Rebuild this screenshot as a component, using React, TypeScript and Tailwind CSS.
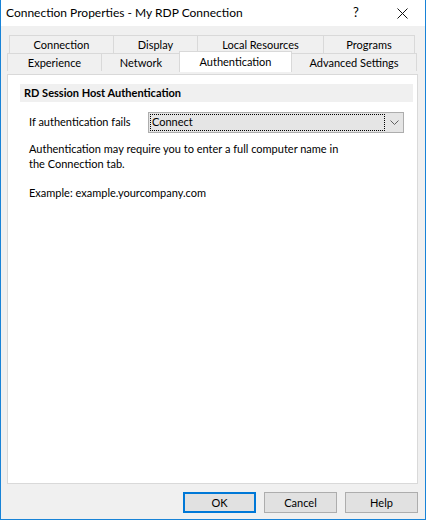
import React from "react";

const font = { fontFamily: 'Lato, "Noto Sans", sans-serif' };

function Tab({ label, w, last }: { label: string; w: number; last?: boolean }) {
  return (
    <div
      className={`flex h-[18px] items-center justify-center whitespace-nowrap border-t border-l border-[#d9d9d9] bg-[#f0f0f0] text-[11px] leading-none text-black ${last ? "border-r" : ""}`}
      style={{ width: w }}
    >
      {label}
    </div>
  );
}

export default function App() {
  return (
    <div
      className="flex h-[520px] w-[426px] flex-col border-x border-b border-[#1883d7] bg-[#f0f0f0] text-black"
      style={font}
    >
      {/* Title bar */}
      <div className="flex h-[26px] items-center bg-white">
        <div className="whitespace-nowrap pl-[5px] text-[12px]">Connection Properties - My RDP Connection</div>
        <div className="ml-auto flex items-center">
          <div className="w-[46px] text-center text-[13px]">?</div>
          <div className="flex w-[46px] items-center justify-center">
            <svg width="11" height="11" viewBox="0 0 11 11">
              <path d="M0.5 0.5 L10.5 10.5 M10.5 0.5 L0.5 10.5" stroke="#111" strokeWidth="1" />
            </svg>
          </div>
        </div>
      </div>

      {/* Tabs */}
      <div className="mt-[9px] flex flex-col">
        <div className="ml-[8px] flex">
          <Tab label="Connection" w={104} />
          <Tab label="Display" w={84} />
          <Tab label="Local Resources" w={126} />
          <Tab label="Programs" w={92} last />
        </div>
        <div className="ml-[6px] flex">
          <Tab label="Experience" w={94} />
          <Tab label="Network" w={79} />
          <div className="relative -top-[2px] z-10 -mx-px flex h-[21px] w-[113px] items-start justify-center whitespace-nowrap border-x border-t border-[#d9d9d9] bg-white pt-[4px] text-[11px] leading-none">
            Authentication
          </div>
          <Tab label="Advanced Settings" w={126} last />
        </div>
      </div>

      {/* Panel */}
      <div className="ml-[6px] h-[410px] w-[411px] border border-[#d9d9d9] bg-white">
        <div className="ml-[12px] mt-[9px] flex h-[18px] w-[393px] items-center whitespace-nowrap bg-[#f0f0f0] px-[4px] text-[11px] font-bold">
          RD Session Host Authentication
        </div>
        <div className="ml-[21px] mt-[10px] flex items-center">
          <div className="w-[119px] whitespace-nowrap text-[11px]">If authentication fails</div>
          <div className="flex h-[21px] w-[256px] items-center border border-[#adadad] bg-[#e5e5e5]">
            <div className="ml-[1px] flex h-[17px] w-[235px] items-center border border-dotted border-black pl-[1px] text-[11px]">
              Connect
            </div>
            <div className="flex flex-1 items-center justify-center">
              <svg width="9" height="5" viewBox="0 0 9 5">
                <path d="M0.5 0.5 L4.5 4.5 L8.5 0.5" stroke="#606060" strokeWidth="1" fill="none" />
              </svg>
            </div>
          </div>
        </div>
        <div className="ml-[21px] mt-[8px] whitespace-nowrap text-[11px] leading-[15px]">
          Authentication may require you to enter a full computer name in
          <br />
          the Connection tab.
        </div>
        <div className="ml-[21px] mt-[14px] whitespace-nowrap text-[11px] leading-[15px]">Example: example.yourcompany.com</div>
      </div>

      {/* Buttons */}
      <div className="mt-[8px] flex justify-end gap-[8px] pr-[7px]">
        <button className="h-[21px] w-[73px] border-2 border-[#0078d7] bg-[#e1e1e1] text-[11px] leading-none">OK</button>
        <button className="h-[21px] w-[73px] border border-[#adadad] bg-[#e1e1e1] text-[11px] leading-none">Cancel</button>
        <button className="h-[21px] w-[73px] border border-[#adadad] bg-[#e1e1e1] text-[11px] leading-none">Help</button>
      </div>
    </div>
  );
}
